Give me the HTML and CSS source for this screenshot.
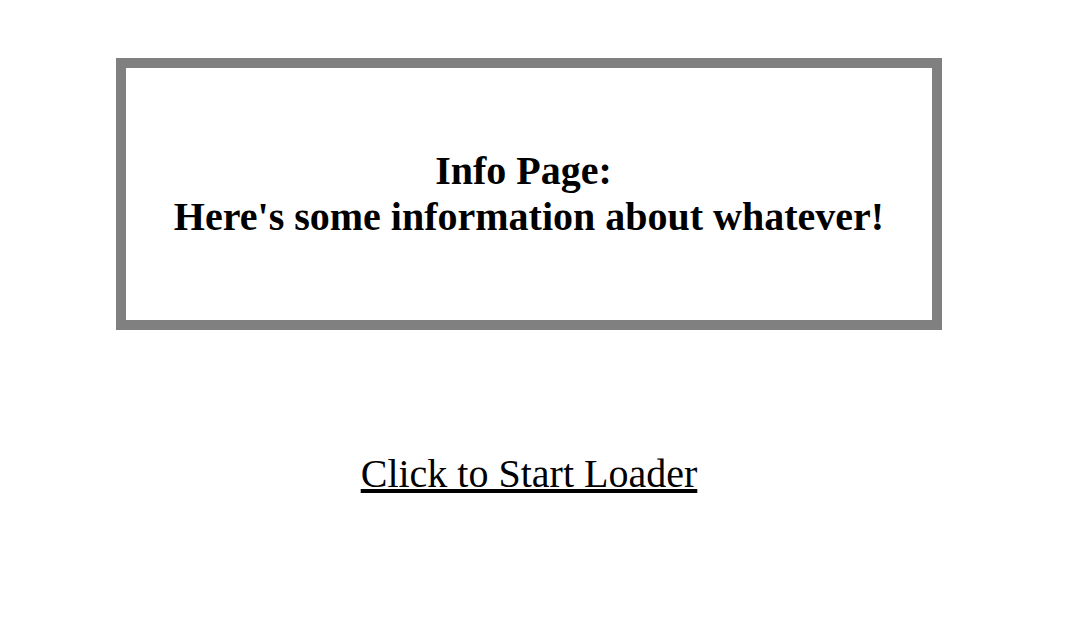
FILE: index.html
```html
<!DOCTYPE html>
<html>
<head>
<meta charset="utf-8">
<link rel="stylesheet" href="styles.css">
</head>
<body>
<div class="page">
  <div class="info-box">
    <h1 class="info-title"><span class="title-line">Info Page:</span><br>Here's some information about whatever!</h1>
  </div>
  <div class="loader-row">
    <a class="loader-link" href="#">Click to Start Loader</a>
  </div>
</div>
</body>
</html>
```
FILE: styles.css
```css
html, body {
  margin: 0;
  padding: 0;
  background: #ffffff;
}
body {
  font-family: "Liberation Serif", "Times New Roman", serif;
  color: #000000;
}
.page {
  width: 1058px;
  display: flex;
  flex-direction: column;
  align-items: center;
  padding-top: 58px;
}
.info-box {
  box-sizing: border-box;
  width: 826px;
  height: 272px;
  border: 10px solid #808080;
  display: flex;
  align-items: center;
  justify-content: center;
}
.info-title {
  margin: 0;
  font-size: 40px;
  line-height: 46px;
  font-weight: bold;
  text-align: center;
}
.title-line {
  padding-right: 11px;
}
.loader-row {
  margin-top: 121px;
  text-align: center;
  font-size: 40px;
  line-height: 46px;
}
.loader-link {
  color: #000000;
  text-decoration: underline;
}
```
